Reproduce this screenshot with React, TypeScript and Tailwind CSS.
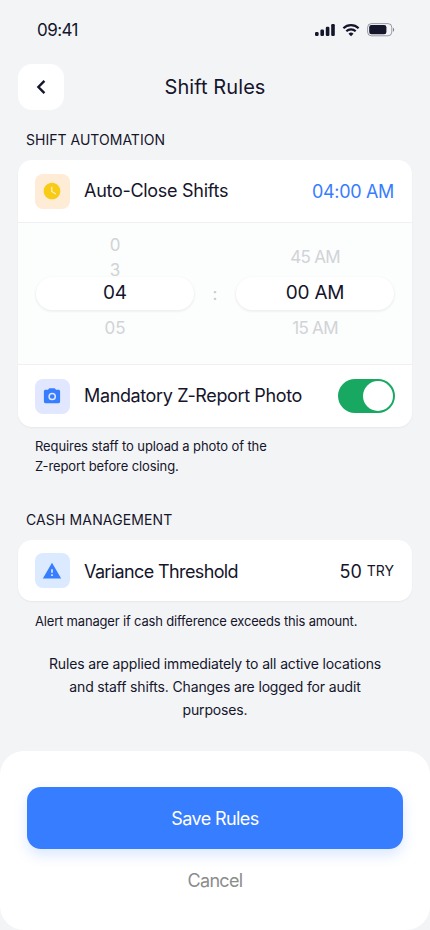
import type { ReactNode } from 'react'
import { MdWarning, MdWatchLater } from 'react-icons/md'

function StatusBar() {
  return (
    <div className="flex h-[60px] items-center justify-between pl-[37px] pr-[35px]">
      <span className="pt-px text-[17px] tracking-[-0.55px]">09:41</span>
      <div className="flex items-center gap-[7px]">
        <svg width="21" height="13" viewBox="0 0 21 13" fill="currentColor">
          <rect x="1" y="8" width="3.6" height="4" rx="1.2" />
          <rect x="6.4" y="5.6" width="3.6" height="6.4" rx="1.2" />
          <rect x="11.8" y="2.8" width="3.6" height="9.2" rx="1.2" />
          <rect x="17.2" y="0" width="3.6" height="12" rx="1.2" />
        </svg>
        <svg width="18" height="13" viewBox="0 0 18 13" fill="none" stroke="currentColor" strokeWidth="2.2">
          <path d="M1.4 4.2a11 11 0 0 1 15.2 0" />
          <path d="M4.3 7.3a6.7 6.7 0 0 1 9.4 0" />
          <path d="M6.5 9.7a3.6 3.6 0 0 1 5 0L9 12.2z" fill="currentColor" stroke="none" />
        </svg>
        <svg width="28" height="14" viewBox="0 0 28 14">
          <rect x="0.6" y="0.6" width="24.2" height="12.2" rx="3.8" fill="none" stroke="currentColor" strokeOpacity="0.4" />
          <rect x="2.2" y="2.1" width="17.2" height="9.2" rx="2.2" fill="currentColor" />
          <path d="M26 4.7c1.6.6 1.6 3.4 0 4z" fill="currentColor" fillOpacity="0.5" />
        </svg>
      </div>
    </div>
  )
}

function CameraIcon() {
  return (
    <svg width="18" height="16" viewBox="0 0 18 16">
      <path
        d="M6.4 0.2h5.2l1.5 1.6h2.4c.9 0 1.6.7 1.6 1.6v10.2c0 .9-.7 1.6-1.6 1.6H2.5c-.9 0-1.6-.7-1.6-1.6V3.4c0-.9.7-1.6 1.6-1.6h2.4z"
        fill="#377dff"
      />
      <circle cx="9.2" cy="8.5" r="3.1" fill="none" stroke="#e0e7ff" strokeWidth="1.5" />
    </svg>
  )
}

function IconTile({ className, children }: { className: string; children: ReactNode }) {
  return (
    <div className={`flex size-[35px] items-center justify-center rounded-lg pr-px ${className}`}>
      {children}
    </div>
  )
}

function SelectedValue({ children }: { children: ReactNode }) {
  return (
    <div className="h-[33px] rounded-full bg-white text-[19px] leading-[32px] tracking-[-0.2px] text-[#15152b] shadow-[0_1px_2px_1px_rgba(0,0,0,0.05)]">
      {children}
    </div>
  )
}

export default function App() {
  return (
    <div className="flex h-[930px] w-[430px] flex-col overflow-hidden bg-[#f3f4f6] font-['Inter',sans-serif] text-[#15152b]">
      <StatusBar />

      <header className="mt-1 grid h-[46px] grid-cols-[46px_1fr_46px] items-center px-[18px]">
        <button className="flex size-[46px] items-center justify-center rounded-[14px] bg-white">
          <svg width="10" height="16" viewBox="0 0 10 16" fill="none" stroke="currentColor" strokeWidth="2.4">
            <path d="M8.4 1.8 2.4 8l6 6.2" />
          </svg>
        </button>
        <h1 className="text-center text-[20px] tracking-[0.08px]">Shift Rules</h1>
      </header>

      <main className="flex flex-1 flex-col px-[18px]">
        <h2 className="mt-5 pl-2 text-[14px] leading-5 tracking-[0.02px]">SHIFT AUTOMATION</h2>

        <section className="mt-[10px] h-[267px] overflow-hidden rounded-[14px] bg-white shadow-[0_1px_2px_rgba(0,0,0,0.05)]">
          <div className="flex h-[62px] items-center pl-[17px] pr-[18px]">
            <IconTile className="bg-[#ffecd6]">
              <MdWatchLater size={20} className="text-[#f8cb15]" />
            </IconTile>
            <span className="ml-[14px] flex-1 pb-px text-[18px] tracking-[-0.29px]">Auto-Close Shifts</span>
            <span className="text-[18px] tracking-[-0.33px] text-[#377dff]">04:00 AM</span>
          </div>

          <div className="flex h-[143px] border-y border-[#eff0f2] bg-[#fcfdfd] px-[18px] text-center text-[17px]">
            <div className="w-[158px] text-[#d1d3d6]">
              <div className="mt-[10px] leading-[25px]">
                <div>0</div>
                <div>3</div>
              </div>
              <div className="-mt-[6px]">
                <SelectedValue>04</SelectedValue>
              </div>
              <div className="mt-[6px] leading-[25px]">05</div>
            </div>
            <div className="flex-1 pt-[58px] leading-[26px] text-[#c8cacd]">:</div>
            <div className="w-[158px] tracking-[-0.7px] text-[#d1d3d6]">
              <div className="mt-[22px] leading-[25px]">45 AM</div>
              <div className="mt-[7px]">
                <SelectedValue>00 AM</SelectedValue>
              </div>
              <div className="mt-[6px] leading-[25px]">15 AM</div>
            </div>
          </div>

          <div className="flex h-[62px] items-center pl-[17px] pr-[17px]">
            <IconTile className="bg-[#e0e7ff]">
              <CameraIcon />
            </IconTile>
            <span className="ml-[14px] flex-1 pb-px text-[18px] tracking-[-0.37px]">Mandatory Z-Report Photo</span>
            <button className="flex h-[34px] w-[57px] items-center justify-end rounded-full bg-[#18a862] pr-[2px]">
              <span className="size-[30px] rounded-full bg-white" />
            </button>
          </div>
        </section>

        <p className="mt-[9px] pl-[17px] text-[13px] leading-5 tracking-[-0.1px]">
          Requires staff to upload a photo of the
          <br />
          Z-report before closing.
        </p>

        <h2 className="mt-[34px] pl-2 text-[14px] leading-5 tracking-[0.13px]">CASH MANAGEMENT</h2>

        <section className="mt-[10px] flex h-[61px] items-center rounded-[14px] bg-white pl-[17px] pr-[18px] shadow-[0_1px_2px_rgba(0,0,0,0.05)]">
          <IconTile className="bg-[#dbeafe]">
            <MdWarning size={20} className="text-[#377dff]" />
          </IconTile>
          <span className="ml-[14px] flex-1 pt-px text-[18px] tracking-[-0.62px]">Variance Threshold</span>
          <span className="pt-px text-[18px]">50</span>
          <span className="ml-[5px] text-[14px]">TRY</span>
        </section>

        <p className="mt-[10px] pl-[17px] text-[13px] leading-5 tracking-[-0.18px]">
          Alert manager if cash difference exceeds this amount.
        </p>

        <p className="mt-[21px] text-center text-[14px] leading-[23px] tracking-[-0.15px]">
          Rules are applied immediately to all active locations
          <br />
          and staff shifts. Changes are logged for audit
          <br />
          purposes.
        </p>
      </main>

      <footer className="flex h-[179px] flex-col rounded-[24px] bg-white px-[27px] pt-9">
        <button className="h-[62px] rounded-[14px] bg-[#377dff] text-[18px] tracking-[-0.6px] text-white shadow-[0_6px_14px_rgba(55,125,255,0.18)]">
          Save Rules
        </button>
        <button className="mt-[18px] h-[27px] text-[18px] tracking-[-0.65px] text-[#8c8c8c]">Cancel</button>
      </footer>
    </div>
  )
}
